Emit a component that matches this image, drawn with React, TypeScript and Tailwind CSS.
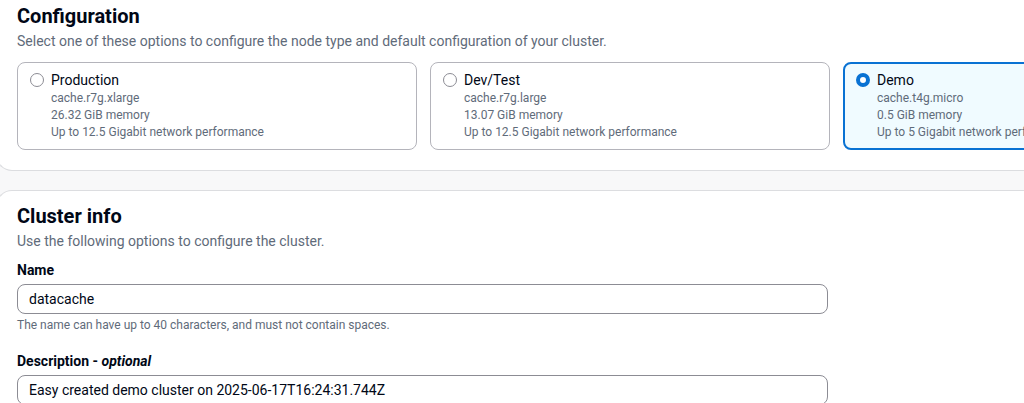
import React from "react";

const OPTIONS = [
  { title: "Production", type: "cache.r7g.xlarge", memory: "26.32 GiB memory", net: "Up to 12.5 Gigabit network performance" },
  { title: "Dev/Test", type: "cache.r7g.large", memory: "13.07 GiB memory", net: "Up to 12.5 Gigabit network performance" },
  { title: "Demo", type: "cache.t4g.micro", memory: "0.5 GiB memory", net: "Up to 5 Gigabit network performance" },
];

function OptionTile({ opt, selected }: { opt: (typeof OPTIONS)[number]; selected: boolean }) {
  return (
    <div
      className={`w-[400px] h-[88px] shrink-0 rounded-lg flex gap-[7px] ${
        selected ? "border-2 border-[#0972d3] bg-[#f0fbff] pl-[11px] pt-[6px]" : "border border-[#b4b4bb] bg-white pl-[12px] pt-[7px]"
      }`}
    >
      <div className="pt-[3px]">
        {selected ? (
          <span className="block w-[14px] h-[14px] rounded-full border-[4px] border-[#0972d3] bg-white" />
        ) : (
          <span className="block w-[14px] h-[14px] rounded-full border border-[#8c8c94] bg-white" />
        )}
      </div>
      <div>
        <p className="text-[14px] leading-[20px] text-[#000716]">{opt.title}</p>
        <p className="text-[12px] leading-[17px] text-[#5f6b7a]">{opt.type}</p>
        <p className="text-[12px] leading-[17px] text-[#5f6b7a]">{opt.memory}</p>
        <p className="text-[12px] leading-[17px] text-[#5f6b7a] whitespace-nowrap">{opt.net}</p>
      </div>
    </div>
  );
}

export default function App() {
  return (
    <div className="w-[1024px] h-[403px] overflow-hidden bg-[#f8f8f9] font-['Roboto',sans-serif]">
      <div className="-ml-1 w-[1120px]">
        {/* Configuration */}
        <section className="bg-white border-b border-l border-[#dcdde0] rounded-bl-2xl pl-5 pt-1 pb-5">
          <h2 className="text-[20px] leading-[24px] font-bold text-[#000716]">Configuration</h2>
          <p className="mt-[3px] text-[14px] leading-[20px] text-[#5f6b7a]">
            Select one of these options to configure the node type and default configuration of your cluster.
          </p>
          <div className="mt-[11px] flex gap-[13px]">
            {OPTIONS.map((o) => (
              <OptionTile key={o.title} opt={o} selected={o.title === "Demo"} />
            ))}
          </div>
        </section>

        {/* Cluster info */}
        <section className="mt-[19px] bg-white border-t border-l border-[#dcdde0] rounded-tl-2xl pl-5 pt-[13px] pb-6">
          <h2 className="text-[20px] leading-[24px] font-bold text-[#000716]">Cluster info</h2>
          <p className="mt-[3px] text-[14px] leading-[20px] text-[#5f6b7a]">Use the following options to configure the cluster.</p>

          <label className="block mt-[9px] text-[14px] leading-[20px] font-bold text-[#000716]">Name</label>
          <div className="mt-[4px] w-[811px] h-[30px] rounded-lg border border-[#8c8c94] flex items-center px-[11px] text-[14px] text-[#000716]">
            datacache
          </div>
          <p className="mt-[3px] text-[12px] leading-[16px] text-[#5f6b7a]">
            The name can have up to 40 characters, and must not contain spaces.
          </p>

          <label className="block mt-[18px] text-[14px] leading-[20px] font-bold text-[#000716]">
            Description - <i>optional</i>
          </label>
          <div className="mt-[4px] w-[811px] h-[30px] rounded-lg border border-[#8c8c94] flex items-center px-[11px] text-[14px] text-[#000716]">
            Easy created demo cluster on 2025-06-17T16:24:31.744Z
          </div>
        </section>
      </div>
    </div>
  );
}
